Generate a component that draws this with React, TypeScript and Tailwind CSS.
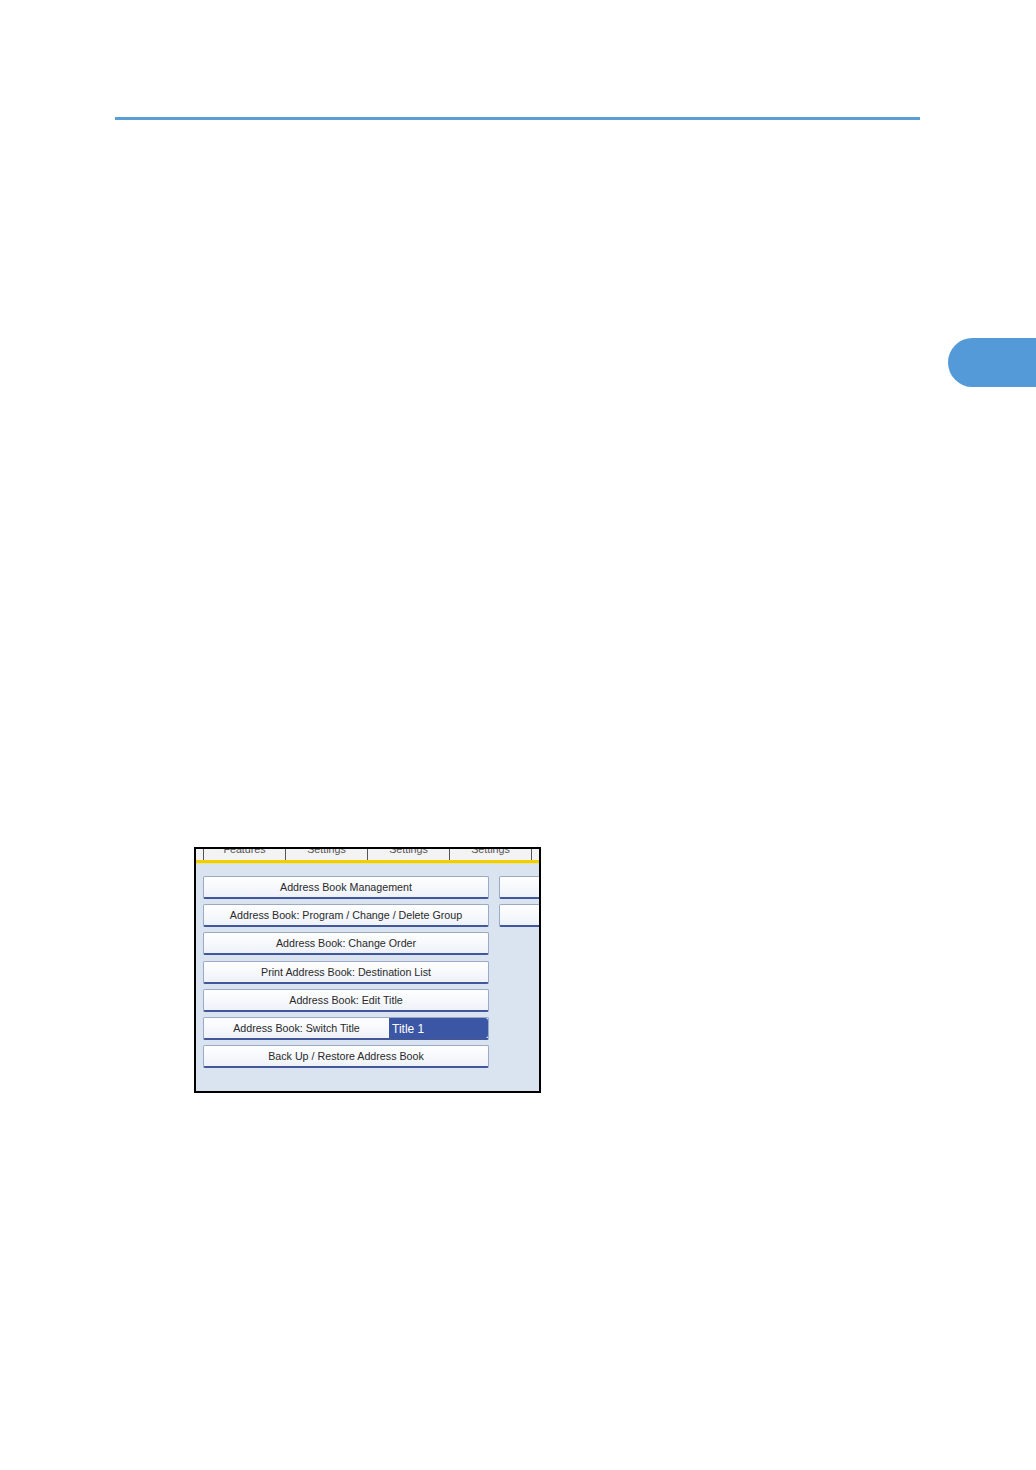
import React from "react";

const font = { fontFamily: '"Liberation Sans", Arial, sans-serif' };

function MenuButton({ label }: { label: string }) {
  return (
    <div className="h-[23px] w-[286px] flex items-center justify-center rounded-[2px] border border-[#9aa9c6] border-b-2 border-b-[#41579a] bg-gradient-to-b from-white to-[#eef2f9] text-[10.7px] text-[#2a2a2a]">
      {label}
    </div>
  );
}

export default function App() {
  const tabs = ["Features", "Settings", "Settings", "Settings"];
  const buttons = [
    "Address Book Management",
    "Address Book: Program / Change / Delete Group",
    "Address Book: Change Order",
    "Print Address Book: Destination List",
    "Address Book: Edit Title",
  ];
  return (
    <div className="w-[1036px] h-[1470px] bg-white flex flex-col overflow-hidden" style={font}>
      {/* header rule */}
      <div className="mt-[117px] ml-[115px] w-[805px] h-[3px] bg-[#5a9fd4]" />

      {/* chapter tab */}
      <div className="mt-[218px] flex justify-end">
        <div className="w-[88px] h-[49px] rounded-l-full bg-[#559ad8]" />
      </div>

      {/* screen capture */}
      <div className="mt-[460px] ml-[194px] w-[347px] h-[246px] border-2 border-black bg-[#d9e4f0] flex flex-col overflow-hidden">
        <div className="h-[11px] bg-[#f3f3f3] flex pl-[7px] overflow-hidden">
          {tabs.map((t, i) => (
            <div
              key={i}
              className="w-[82px] shrink-0 h-[11px] border-l border-[#555] flex justify-center overflow-hidden"
            >
              <span className="text-[10.7px] leading-[11px] -mt-[5px] text-[#555]">{t}</span>
            </div>
          ))}
          <div className="w-[4px] shrink-0 border-l border-[#555]" />
        </div>
        <div className="h-[3px] bg-[#f0cf00]" />
        <div className="h-[1px] bg-[#e9e2a0]" />

        <div className="flex gap-[10px] pl-[7px] pt-[12px]">
          <div className="flex flex-col gap-[5.2px]">
            {buttons.map((b) => (
              <MenuButton key={b} label={b} />
            ))}
            <div className="h-[23px] w-[286px] flex rounded-[2px] border border-[#9aa9c6] border-b-2 border-b-[#41579a] bg-gradient-to-b from-white to-[#eef2f9] text-[10.7px] text-[#2a2a2a] overflow-hidden">
              <div className="w-[185px] flex items-center justify-center">Address Book: Switch Title</div>
              <div className="flex-1 bg-[#3c56a6] text-white text-[12px] flex items-center pl-[3px] pt-[3px] rounded-r-[3px]">
                Title 1
              </div>
            </div>
            <MenuButton label="Back Up / Restore Address Book" />
          </div>
          <div className="flex flex-col gap-[5.2px]">
            <div className="h-[23px] w-[50px] rounded-[2px] border border-[#9aa9c6] border-b-2 border-b-[#41579a] bg-gradient-to-b from-white to-[#eef2f9]" />
            <div className="h-[23px] w-[50px] rounded-[2px] border border-[#9aa9c6] border-b-2 border-b-[#41579a] bg-gradient-to-b from-white to-[#eef2f9]" />
          </div>
        </div>
      </div>
    </div>
  );
}
